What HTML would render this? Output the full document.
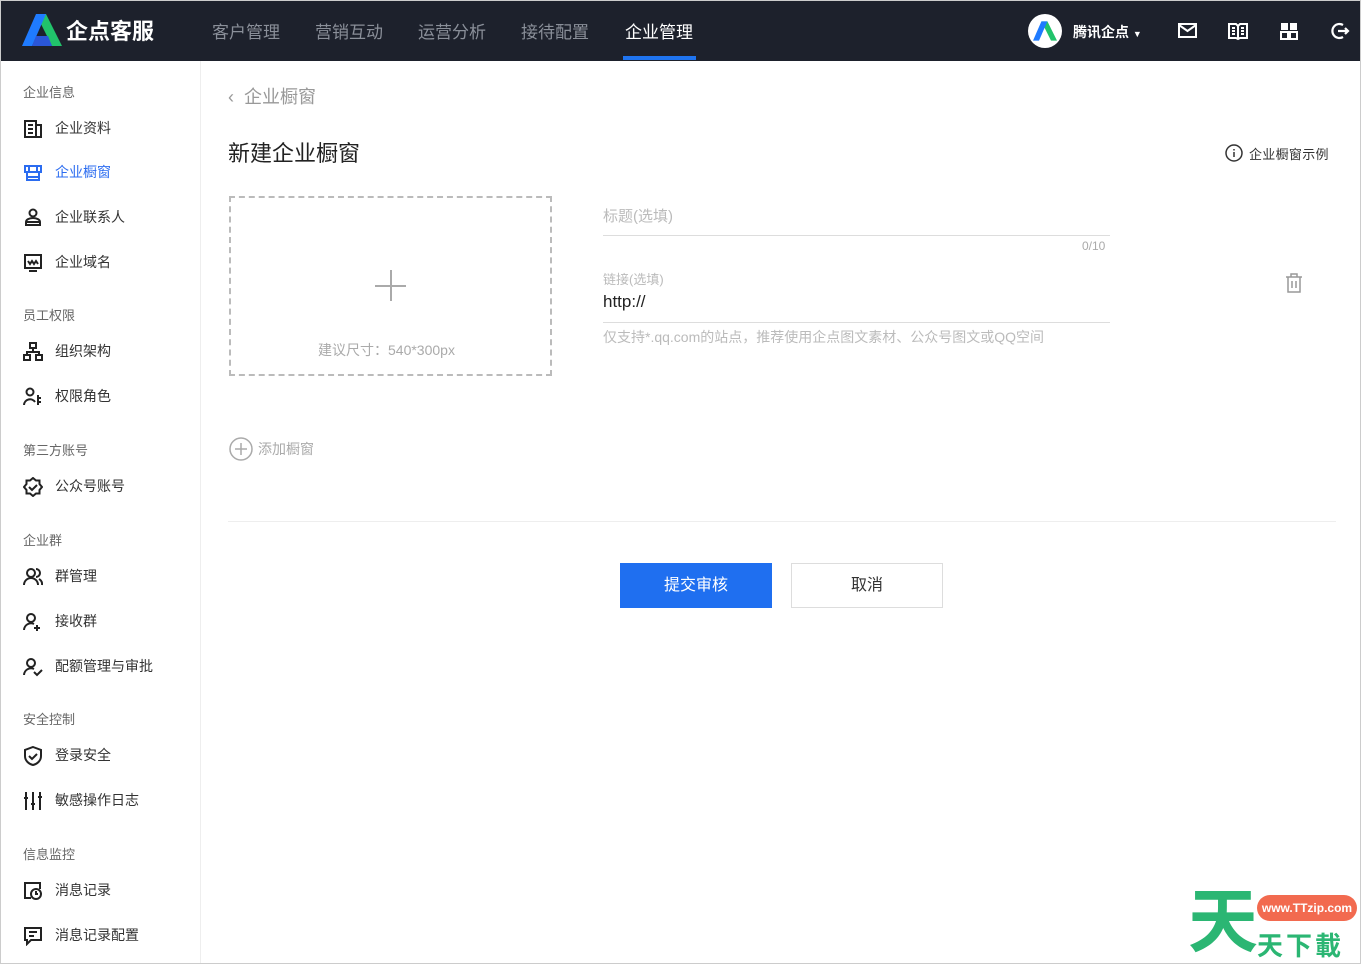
<!DOCTYPE html>
<html><head><meta charset="utf-8"><style>
*{margin:0;padding:0;box-sizing:border-box}
body{width:1361px;height:964px;overflow:hidden;background:#fff;font-family:"Liberation Sans","Noto Sans CJK SC",sans-serif;position:relative;color:#333}
.frame{position:absolute;left:0;top:0;width:1361px;height:964px;border:1px solid #ccc;pointer-events:none}
.hdr{position:absolute;left:0;top:0;width:1361px;height:61px;background:#1d212c}
.a{position:absolute;white-space:nowrap}
.nav{top:18px;font-size:17px;color:#8a8f99}
.sh{font-size:13px;color:#666;left:23px}
.si{font-size:14px;color:#333;left:55px}
.ic{position:absolute;left:23px}
</style></head><body>
<div class="hdr"></div>
<svg class="a" style="left:22px;top:14px" width="40" height="32" viewBox="0 0 40 32"><path d="M14 0h10l16 32h-10z" fill="#21c36b"/><path d="M14 0h10L10 32H0z" fill="#1f7bff"/><path d="M14 22h12l4 10H10z" fill="#2a56d8"/></svg>
<div class="a" style="left:66px;top:14px;font-size:22px;color:#fff;font-weight:bold">企点客服</div>
<div class="a nav" style="left:212px">客户管理</div>
<div class="a nav" style="left:315px">营销互动</div>
<div class="a nav" style="left:418px">运营分析</div>
<div class="a nav" style="left:521px">接待配置</div>
<div class="a nav" style="left:625px;color:#fff">企业管理</div>
<div class="a" style="left:623px;top:56px;width:73px;height:4px;background:#1f74f0"></div>
<div class="a" style="left:1028px;top:14px;width:34px;height:34px;border-radius:50%;background:#fff"></div>
<svg class="a" style="left:1033px;top:20px" width="24" height="22" viewBox="0 0 40 32"><path d="M14 0h10l16 32h-10z" fill="#21c36b"/><path d="M14 0h10L10 32H0z" fill="#1f7bff"/></svg>
<div class="a" style="left:1073px;top:22px;font-size:14px;color:#fff;font-weight:bold">腾讯企点 <span style="font-size:9px">▼</span></div>
<svg class="a" style="left:1178px;top:22px" width="20" height="18" fill="none" stroke="#fff" stroke-width="2"><rect x="1" y="2" width="17" height="13"/><path d="M1 3l8.5 6L18 3"/></svg>
<svg class="a" style="left:1228px;top:21px" width="20" height="20" fill="none" stroke="#fff" stroke-width="2"><path d="M1 3h7l2 2 2-2h7v14h-7l-2 1-2-1H1z M10 5v12 M4 7h3M4 10h3M4 13h3M13 7h3M13 10h3M13 13h3"/></svg>
<svg class="a" style="left:1280px;top:22px" width="18" height="18" fill="#fff"><rect x="1" y="1" width="7" height="7"/><rect x="10" y="1" width="7" height="7"/><rect x="1" y="10" width="7" height="7" fill="none" stroke="#fff" stroke-width="2"/><rect x="10" y="10" width="7" height="7" fill="none" stroke="#fff" stroke-width="2"/></svg>
<svg class="a" style="left:1330px;top:22px" width="20" height="18" fill="none" stroke="#fff" stroke-width="2.2"><path d="M13 3A7 7 0 1 0 13 15"/><path d="M8 9h10M15 6l3 3-3 3"/></svg>

<div class="a" style="left:200px;top:61px;width:1px;height:903px;background:#eee"></div>
<div class="a sh" style="top:82px">企业信息</div>
<svg class="ic" style="top:119px" width="20" height="20" fill="none" stroke="#222" stroke-width="2"><rect x="2" y="2" width="11" height="16"/><path d="M13 6h5v12h-5M5 6h5M5 10h5M5 14h5"/></svg>
<div class="a si" style="top:118px">企业资料</div>
<svg class="ic" style="top:164px" width="20" height="18" fill="none" stroke="#2b6cf0" stroke-width="2"><path d="M2 2h16v6H2z M6 2v6M14 2v6M4 8v8h12V8M4 13h12"/></svg>
<div class="a si" style="top:162px;color:#2b6cf0">企业橱窗</div>
<svg class="ic" style="top:208px" width="20" height="20" fill="none" stroke="#222" stroke-width="2"><circle cx="10" cy="5" r="3.5"/><path d="M3 17v-3a7 4 0 0 1 14 0v3zM3 14h14"/></svg>
<div class="a si" style="top:207px">企业联系人</div>
<svg class="ic" style="top:253px" width="20" height="20" fill="none" stroke="#222" stroke-width="2"><rect x="2" y="2" width="16" height="13"/><path d="M6 18h8M5 8l2 3 2-3 2 3 2-3 2 3"/></svg>
<div class="a si" style="top:252px">企业域名</div>
<div class="a sh" style="top:305px">员工权限</div>
<svg class="ic" style="top:342px" width="20" height="20" fill="none" stroke="#222" stroke-width="2"><rect x="7" y="1" width="6" height="5"/><rect x="1" y="13" width="6" height="5"/><rect x="13" y="13" width="6" height="5"/><path d="M10 6v4M4 13v-3h12v3"/></svg>
<div class="a si" style="top:341px">组织架构</div>
<svg class="ic" style="top:387px" width="20" height="20" fill="none" stroke="#222" stroke-width="2"><circle cx="7" cy="5" r="3.5"/><path d="M1 18a6 6 0 0 1 11-3M15 8v10M15 11h3M15 15h3"/></svg>
<div class="a si" style="top:386px">权限角色</div>
<div class="a sh" style="top:440px">第三方账号</div>
<svg class="ic" style="top:477px" width="20" height="20" fill="none" stroke="#222" stroke-width="2"><path d="M10 1l3 2.5h3.5v3.5L19 10l-2.5 3v3.5H13L10 19l-3-2.5H3.5V13L1 10l2.5-3V3.5H7z"/><path d="M6 10l3 3 5-5"/></svg>
<div class="a si" style="top:476px">公众号账号</div>
<div class="a sh" style="top:530px">企业群</div>
<svg class="ic" style="top:567px" width="20" height="20" fill="none" stroke="#222" stroke-width="2"><circle cx="8" cy="6" r="4"/><path d="M1 18a7 7 0 0 1 14 0M13 2a4 4 0 0 1 0 8M16 12a6 6 0 0 1 3 6"/></svg>
<div class="a si" style="top:566px">群管理</div>
<svg class="ic" style="top:612px" width="20" height="20" fill="none" stroke="#222" stroke-width="2"><circle cx="8" cy="6" r="4"/><path d="M1 18a7 7 0 0 1 10-6M14 13v6M11 16h6"/></svg>
<div class="a si" style="top:611px">接收群</div>
<svg class="ic" style="top:657px" width="20" height="20" fill="none" stroke="#222" stroke-width="2"><circle cx="8" cy="6" r="4"/><path d="M1 18a7 7 0 0 1 10-6M11 15l3 3 5-5"/></svg>
<div class="a si" style="top:656px">配额管理与审批</div>
<div class="a sh" style="top:709px">安全控制</div>
<svg class="ic" style="top:746px" width="20" height="20" fill="none" stroke="#222" stroke-width="2"><path d="M10 1l8 3v6c0 5-4 8-8 9-4-1-8-4-8-9V4z"/><path d="M6 10l3 3 5-5"/></svg>
<div class="a si" style="top:745px">登录安全</div>
<svg class="ic" style="top:791px" width="20" height="20" fill="none" stroke="#222" stroke-width="2"><path d="M3 1v18M10 1v18M17 1v18M1 7h4M8 13h4M15 6h4"/></svg>
<div class="a si" style="top:790px">敏感操作日志</div>
<div class="a sh" style="top:844px">信息监控</div>
<svg class="ic" style="top:881px" width="20" height="20" fill="none" stroke="#222" stroke-width="2"><path d="M8 17H2V2h15v6"/><circle cx="13" cy="13" r="5"/><path d="M13 10v3h2"/></svg>
<div class="a si" style="top:880px">消息记录</div>
<svg class="ic" style="top:926px" width="20" height="20" fill="none" stroke="#222" stroke-width="2"><path d="M2 2h16v12H8l-4 4v-4H2z M6 6h8M6 10h5"/></svg>
<div class="a si" style="top:925px">消息记录配置</div>

<div class="a" style="left:228px;top:83px;font-size:18px;color:#999">‹&nbsp; 企业橱窗</div>
<div class="a" style="left:228px;top:136px;font-size:22px;color:#222">新建企业橱窗</div>
<svg class="a" style="left:1225px;top:144px" width="18" height="18" fill="none" stroke="#333" stroke-width="1.5"><circle cx="9" cy="9" r="8"/><path d="M9 8v5M9 5v1.5"/></svg>
<div class="a" style="left:1249px;top:144px;font-size:13px;color:#333;letter-spacing:0.3px">企业橱窗示例</div>
<div class="a" style="left:229px;top:196px;width:323px;height:180px;border:2px dashed #bbb"></div>
<div class="a" style="left:375px;top:285px;width:31px;height:1.5px;background:#aaa"></div>
<div class="a" style="left:390px;top:270px;width:1.5px;height:31px;background:#aaa"></div>
<div class="a" style="left:318px;top:340px;font-size:14px;color:#aaa">建议尺寸：540*300px</div>
<div class="a" style="left:603px;top:205px;font-size:15px;color:#bbb">标题(选填)</div>
<div class="a" style="left:603px;top:235px;width:507px;height:1px;background:#ddd"></div>
<div class="a" style="left:1082px;top:239px;font-size:12px;color:#aaa">0/10</div>
<div class="a" style="left:603px;top:269px;font-size:13px;color:#bbb">链接(选填)</div>
<div class="a" style="left:603px;top:292px;font-size:17px;color:#222">http://</div>
<div class="a" style="left:603px;top:322px;width:507px;height:1px;background:#ddd"></div>
<div class="a" style="left:603px;top:327px;font-size:14px;color:#bbb">仅支持*.qq.com的站点，推荐使用企点图文素材、公众号图文或QQ空间</div>
<svg class="a" style="left:1285px;top:273px" width="18" height="20" fill="none" stroke="#999" stroke-width="1.5"><path d="M1 4h16M6 4V1h6v3M3 4v15h12V4M7 8v7M11 8v7"/></svg>
<svg class="a" style="left:229px;top:437px" width="24" height="24" fill="none" stroke="#aaa" stroke-width="1.5"><circle cx="12" cy="12" r="11"/><path d="M12 6v12M6 12h12"/></svg>
<div class="a" style="left:258px;top:439px;font-size:14px;color:#aaa">添加橱窗</div>
<div class="a" style="left:228px;top:521px;width:1108px;height:1px;background:#eee"></div>
<div class="a" style="left:620px;top:563px;width:152px;height:45px;background:#1f6ff0;color:#fff;font-size:16px;text-align:center;line-height:45px">提交审核</div>
<div class="a" style="left:791px;top:563px;width:152px;height:45px;border:1px solid #ddd;color:#333;font-size:16px;text-align:center;line-height:43px">取消</div>

<div class="a" style="left:1188px;top:884px;font-size:70px;line-height:76px;font-weight:bold;color:#2bb673">天</div>
<div class="a" style="left:1257px;top:895px;width:100px;height:26px;border-radius:13px;background:#f26a4f;color:#fff;font-size:12px;font-weight:bold;text-align:center;line-height:26px">www.TTzip.com</div>
<div class="a" style="left:1257px;top:926px;font-size:26px;font-weight:bold;color:#2bb673;letter-spacing:3px">天下載</div>
<div class="frame"></div>
</body></html>
